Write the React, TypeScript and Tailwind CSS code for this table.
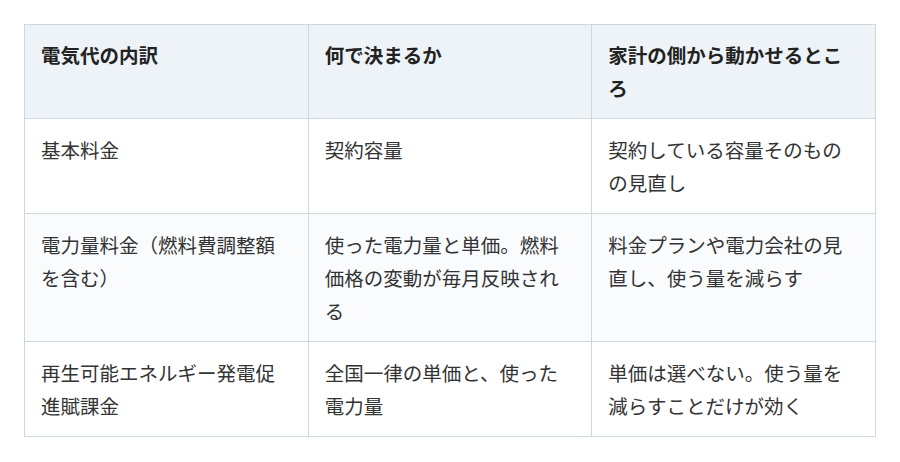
const rows = [
  ['基本料金', '契約容量', '契約している容量そのものの見直し'],
  ['電力量料金（燃料費調整額を含む）', '使った電力量と単価。燃料価格の変動が毎月反映される', '料金プランや電力会社の見直し、使う量を減らす'],
  ['再生可能エネルギー発電促進賦課金', '全国一律の単価と、使った電力量', '単価は選べない。使う量を減らすことだけが効く'],
];

const headers = ['電気代の内訳', '何で決まるか', '家計の側から動かせるところ'];

export default function App() {
  return (
    <div className="min-h-[462px] bg-white p-6 font-['Noto_Sans_CJK_JP','Noto_Sans',sans-serif]">
      <table className="w-[852px] table-fixed border-collapse text-[19.5px] leading-[33px]">
        <thead>
          <tr className="bg-[#eef3f8]">
            {headers.map((h) => (
              <th
                key={h}
                className="border border-[#cfd7df] px-4 pt-[13px] pb-[14px] text-left align-top font-bold text-[#222]"
              >
                {h}
              </th>
            ))}
          </tr>
        </thead>
        <tbody>
          {rows.map((r, i) => (
            <tr key={i} className={i % 2 === 1 ? 'bg-[#f9fbfd]' : 'bg-white'}>
              {r.map((c, j) => (
                <td
                  key={j}
                  className="border border-[#cfd7df] px-4 py-[14px] align-top text-[#333]"
                >
                  {c}
                </td>
              ))}
            </tr>
          ))}
        </tbody>
      </table>
    </div>
  );
}
